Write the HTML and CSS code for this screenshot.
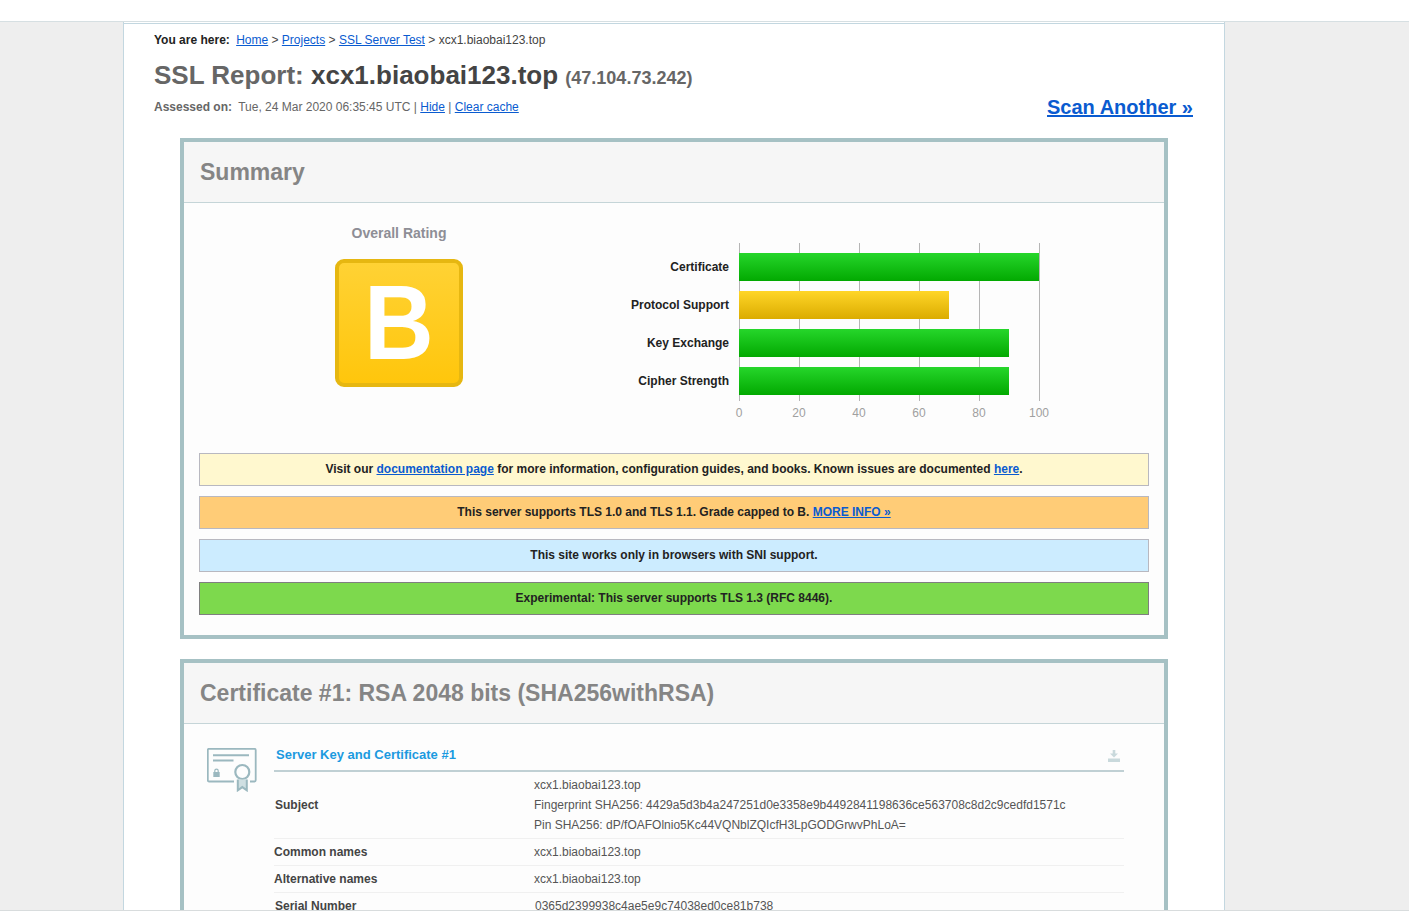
FILE: index.html
```html
<!DOCTYPE html>
<html lang="en">
<head>
<meta charset="utf-8">
<title>SSL Report: xcx1.biaobai123.top</title>
<link rel="stylesheet" href="styles.css">
</head>
<body>
<div class="topbar"></div>
<div class="stage">
  <div class="page">
    <div class="crumbs"><b>You are here:</b> <a href="#">Home</a> &gt; <a href="#">Projects</a> &gt; <a href="#">SSL Server Test</a> &gt; xcx1.biaobai123.top</div>
    <h1 class="title">SSL Report: <span class="host">xcx1.biaobai123.top</span> <span class="ip">(47.104.73.242)</span></h1>
    <div class="assess">
      <div class="assessed"><b>Assessed on:</b> Tue, 24 Mar 2020 06:35:45 UTC | <a href="#">Hide</a> | <a href="#">Clear cache</a></div>
      <a class="scan" href="#">Scan Another »</a>
    </div>

    <section class="panel summary">
      <header class="panel-head"><h2>Summary</h2></header>
      <div class="panel-body">
        <div class="rating-row">
          <div class="overall">
            <div class="overall-label">Overall Rating</div>
            <div class="grade"><span class="grade-letter">B</span></div>
          </div>
          <div class="chart">
            <div class="chart-labels">
              <div>Certificate</div>
              <div>Protocol Support</div>
              <div>Key Exchange</div>
              <div>Cipher Strength</div>
            </div>
            <div class="chart-main">
              <div class="plot">
                <div class="bar green w100"></div>
                <div class="bar amber w70"></div>
                <div class="bar green w90"></div>
                <div class="bar green w90"></div>
              </div>
              <div class="ticks"><span>0</span><span>20</span><span>40</span><span>60</span><span>80</span><span>100</span></div>
            </div>
          </div>
        </div>
        <div class="notice n-yellow">Visit our <a href="#">documentation page</a> for more information, configuration guides, and books. Known issues are documented <a href="#">here</a>.</div>
        <div class="notice n-orange">This server supports TLS 1.0 and TLS 1.1. Grade capped to B. <a href="#">MORE INFO »</a></div>
        <div class="notice n-blue">This site works only in browsers with SNI support.</div>
        <div class="notice n-green">Experimental: This server supports TLS 1.3 (RFC 8446).</div>
      </div>
    </section>

    <section class="panel cert">
      <header class="panel-head"><h2>Certificate #1: RSA 2048 bits (SHA256withRSA)</h2></header>
      <div class="cert-body">
        <svg class="cert-icon" width="50" height="44" viewBox="0 0 50 44" fill="none" stroke="#9bb8bf" stroke-width="1.800" aria-hidden="true">
          <path d="M27 33.500H2a1.200 1.200 0 0 1-1.200-1.200V2A1.200 1.200 0 0 1 2 .8h45.500a1.200 1.200 0 0 1 1.200 1.200v30.300a1.200 1.200 0 0 1-1.200 1.200H43"/>
          <path d="M6 7.300h36M6 12.500h20.500" stroke-width="2"/>
          <circle cx="35.300" cy="24" r="7" stroke-width="2.200"/>
          <path d="M30.800 31.500v10.800l4.500-3.200 4.500 3.200V31.500" stroke-width="2" fill="#cfdfe2"/>
          <path d="M6.300 24h6.400v5H6.300z" fill="#9bb8bf" stroke="none"/>
          <path d="M7.800 24v-1.200a1.700 1.700 0 0 1 3.400 0V24" stroke-width="1.200"/>
        </svg>
        <div class="cert-table">
          <div class="cert-title">
            <h3>Server Key and Certificate #1</h3>
            <svg class="dl" width="12" height="12" viewBox="0 0 12 12" fill="#c9d9dc" aria-hidden="true"><path d="M4.700 0h2.600v3.500H10L6 7.500 2 3.500h2.700zM0 8.500h12V12H0z"/></svg>
          </div>
          <div class="row tall">
            <div class="key shift">Subject</div>
            <div class="val">xcx1.biaobai123.top<br>Fingerprint SHA256: 4429a5d3b4a247251d0e3358e9b4492841198636ce563708c8d2c9cedfd1571c<br>Pin SHA256: dP/fOAFOlnio5Kc44VQNblZQIcfH3LpGODGrwvPhLoA=</div>
          </div>
          <div class="row"><div class="key">Common names</div><div class="val">xcx1.biaobai123.top</div></div>
          <div class="row"><div class="key">Alternative names</div><div class="val">xcx1.biaobai123.top</div></div>
          <div class="row"><div class="key shift">Serial Number</div><div class="val shift">0365d2399938c4ae5e9c74038ed0ce81b738</div></div>
        </div>
      </div>
    </section>
  </div>
</div>
<div class="footer"></div>
</body>
</html>
```
FILE: styles.css
```css
* { box-sizing: border-box; }
html, body { margin: 0; height: 914px; overflow: hidden; }
body {
  display: flex;
  flex-direction: column;
  background: #fff;
  font-family: "Liberation Sans", Arial, sans-serif;
  font-size: 12px;
  color: #444;
}
a { color: #0a5bd0; text-decoration: underline; }
.topbar { height: 22px; flex: none; background: #fff; border-bottom: 1px solid #d6dfe2; }
.stage { height: 888px; flex: none; background: #eeeeee; overflow: hidden; }
.footer { flex: 1; background: #fff; border-top: 1px solid #d8dcdd; }
.page {
  width: 1102px;
  height: 888px;
  margin: 0 0 0 123px;
  padding: 1px 0 0;
  background: #fff;
  border-left: 1px solid #c3d7e0;
  border-right: 1px solid #c3d7e0;
  overflow: hidden;
}
.page::before { content: ""; display: block; height: 1px; background: #c3d7e0; }
.crumbs { margin: 0 0 0 30px; padding-top: 9px; line-height: 14px; color: #444; }
.crumbs b { color: #222; margin-right: 3px; }
.title { margin: 12px 0 0 30px; font-size: 26px; line-height: 32px; font-weight: bold; color: #666; }
.host { color: #444; }
.ip { font-size: 18px; }
.assess { display: flex; justify-content: space-between; align-items: flex-end; margin: 0 31px 0 30px; height: 25px; }
.assessed { color: #666; line-height: 14px; padding-bottom: 5px; }
.assessed b { margin-right: 3px; }
.scan { font-size: 20px; font-weight: bold; line-height: 24px; color: #0a5bd0; }
.panel { width: 988px; margin: 0 0 0 56px; border: 4px solid #a6c1c4; background: #fdfdfd; }
.summary { margin-top: 19px; height: 501px; }
.cert { margin-top: 20px; height: 300px; }
.panel-head { height: 61px; background: #f6f6f6; border-bottom: 1px solid #c5d5d8; padding: 0 16px; display: flex; align-items: center; }
.panel-head h2 { margin: 0; font-size: 23px; line-height: 60px; font-weight: bold; color: #858585; }
.panel-body { padding: 0 15px; }
.rating-row { display: flex; height: 250px; }
.overall { width: 400px; padding-top: 21px; display: flex; flex-direction: column; align-items: center; }
.overall-label { font-size: 14px; line-height: 18px; font-weight: bold; color: #8e8e96; }
.grade {
  width: 128px;
  height: 128px;
  margin-top: 17px;
  border: 4px solid #e6b711;
  border-radius: 9px;
  background: linear-gradient(#ffd234, #ffc60c);
  color: #fff;
  font-size: 105px;
  line-height: 120px;
  font-weight: bold;
  text-align: center;
}
.grade-letter { display: inline-block; transform: scaleX(0.92); }
.chart { display: flex; padding-top: 40px; }
.chart-labels { width: 130px; padding-top: 10px; color: #222; font-weight: bold; text-align: right; }
.chart-labels div { height: 38px; line-height: 28px; }
.chart-main { margin-left: 10px; }
.plot {
  width: 301px;
  height: 158px;
  padding-top: 10px;
  display: flex;
  flex-direction: column;
  gap: 10px;
  background: repeating-linear-gradient(90deg, #b5b5b5 0 1px, transparent 1px 60px);
}
.bar { height: 28px; }
.green { background: linear-gradient(#26d62b, #02a901); }
.amber { background: linear-gradient(#ffd628, #dbac00); }
.w100 { width: 300px; } .w90 { width: 270px; } .w70 { width: 210px; }
.ticks { display: flex; width: 301px; height: 24px; color: #a0a0a0; line-height: 24px; }
.ticks span { width: 60px; text-align: center; flex: none; }
.ticks span:first-child { margin-left: -30px; }
.notice {
  height: 33px;
  margin-top: 10px;
  border: 1px solid #b8b8c0;
  line-height: 30px;
  text-align: center;
  font-weight: bold;
  color: #222;
}
.rating-row + .notice { margin-top: 0; }
.n-yellow { background: #fff8cf; }
.n-orange { background: #ffcc77; }
.n-blue { background: #ccecff; }
.n-green { background: #7dd94d; border-color: #7f7f7f; }
.cert-body { display: flex; padding: 24px 40px 0 23px; }
.cert-icon { flex: none; margin: 0 17px 0 0; }
.cert-table { width: 850px; }
.cert-title { display: flex; justify-content: space-between; align-items: flex-start; height: 24px; padding: 0 4px 0 2px; border-bottom: 2px solid #c0d0d4; }
.cert-title h3 { margin: 0; font-size: 13px; line-height: 14px; font-weight: bold; color: #1b9ae0; }
.dl { margin-top: 2px; }
.row { display: flex; min-height: 27px; border-bottom: 1px solid #f0f0f0; line-height: 26px; align-items: center; }
.row.tall { height: 67px; line-height: 20px; }
.key { width: 260px; flex: none; font-weight: bold; color: #444; }
.val { color: #555; }
.shift { padding-left: 1px; }
```
